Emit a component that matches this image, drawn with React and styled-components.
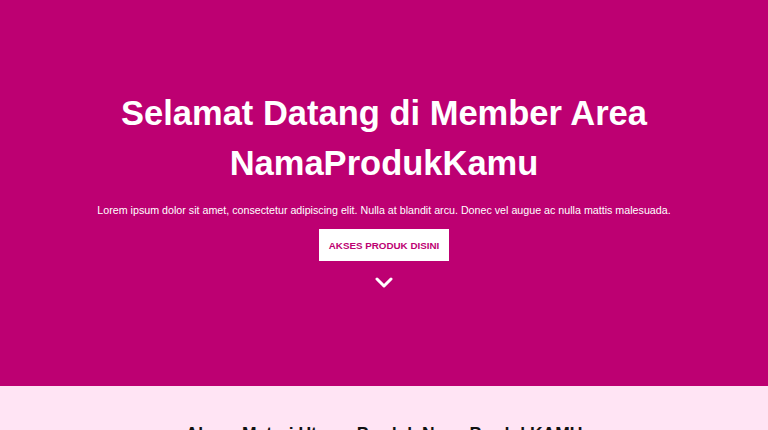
import React from 'react';
import styled, { createGlobalStyle } from 'styled-components';

const GlobalStyle = createGlobalStyle`
  * {
    box-sizing: border-box;
  }

  body {
    margin: 0;
    font-family: "Liberation Sans", Arial, sans-serif;
    background: #ffe4f4;
  }
`;

const Hero = styled.section`
  background-color: #bd0072;
  height: 386px;
  padding-top: 88px;
  display: flex;
  flex-direction: column;
  align-items: center;
  text-align: center;
  color: #fff;
`;

const Title = styled.h1`
  margin: 0;
  max-width: 600px;
  font-size: 34.5px;
  line-height: 50px;
  font-weight: 700;
`;

const Lead = styled.p`
  margin: 14px 0 0;
  font-size: 10.7px;
  line-height: 16px;
`;

const Button = styled.a`
  display: inline-flex;
  align-items: center;
  justify-content: center;
  margin-top: 11px;
  width: 130px;
  height: 32px;
  background: #fff;
  color: #bd0072;
  font-size: 9.8px;
  font-weight: 700;
  text-decoration: none;
  text-transform: uppercase;
`;

const Chevron = styled.svg`
  margin-top: 16px;
  width: 18px;
  height: 11px;
`;

const Materials = styled.section`
  background: #ffe4f4;
  padding: 36px 20px 40px;
  text-align: center;
`;

const SectionTitle = styled.h2`
  margin: 0;
  font-size: 17.5px;
  line-height: 24px;
  font-weight: 700;
  color: #111;
`;

const App = () => {
  return (
    <>
      <GlobalStyle />
      <Hero>
        <Title>Selamat Datang di Member Area NamaProdukKamu</Title>
        <Lead>
          Lorem ipsum dolor sit amet, consectetur adipiscing elit. Nulla at blandit arcu. Donec vel augue ac nulla mattis malesuada.
        </Lead>
        <Button href="#materi">Akses Produk Disini</Button>
        <Chevron viewBox="0 0 18 11" fill="none">
          <path d="M2 2l7 7 7-7" stroke="#fff" strokeWidth="3" strokeLinecap="round" strokeLinejoin="round" />
        </Chevron>
      </Hero>
      <Materials id="materi">
        <SectionTitle>Akses Materi Utama Produk NamaProdukKAMU</SectionTitle>
      </Materials>
    </>
  );
};

export default App;
